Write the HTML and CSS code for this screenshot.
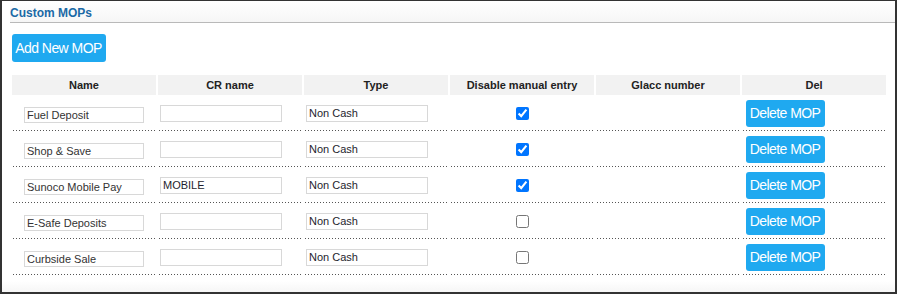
FILE: index.html
```html
<!DOCTYPE html>
<html>
<head>
<meta charset="utf-8">
<link rel="stylesheet" href="styles.css">
</head>
<body>
<div class="panel">
  <div class="panel-head"><span class="panel-title">Custom MOPs</span></div>
  <div class="toolbar"><button class="btn btn-add">Add New MOP</button></div>
  <table class="mops">
    <thead>
      <tr>
        <th>Name</th>
        <th>CR name</th>
        <th>Type</th>
        <th>Disable manual entry</th>
        <th>Glacc number</th>
        <th>Del</th>
      </tr>
    </thead>
    <tbody>
      <tr>
        <td><input class="in-name" type="text" value="Fuel Deposit"></td>
        <td><input class="in-field" type="text" value=""></td>
        <td><input class="in-field" type="text" value="Non Cash"></td>
        <td><input class="chk" type="checkbox" checked></td>
        <td></td>
        <td><button class="btn btn-del">Delete MOP</button></td>
      </tr>
      <tr>
        <td><input class="in-name" type="text" value="Shop &amp; Save"></td>
        <td><input class="in-field" type="text" value=""></td>
        <td><input class="in-field" type="text" value="Non Cash"></td>
        <td><input class="chk" type="checkbox" checked></td>
        <td></td>
        <td><button class="btn btn-del">Delete MOP</button></td>
      </tr>
      <tr>
        <td><input class="in-name" type="text" value="Sunoco Mobile Pay"></td>
        <td><input class="in-field" type="text" value="MOBILE"></td>
        <td><input class="in-field" type="text" value="Non Cash"></td>
        <td><input class="chk" type="checkbox" checked></td>
        <td></td>
        <td><button class="btn btn-del">Delete MOP</button></td>
      </tr>
      <tr>
        <td><input class="in-name" type="text" value="E-Safe Deposits"></td>
        <td><input class="in-field" type="text" value=""></td>
        <td><input class="in-field" type="text" value="Non Cash"></td>
        <td><input class="chk" type="checkbox"></td>
        <td></td>
        <td><button class="btn btn-del">Delete MOP</button></td>
      </tr>
      <tr>
        <td><input class="in-name" type="text" value="Curbside Sale"></td>
        <td><input class="in-field" type="text" value=""></td>
        <td><input class="in-field" type="text" value="Non Cash"></td>
        <td><input class="chk" type="checkbox"></td>
        <td></td>
        <td><button class="btn btn-del">Delete MOP</button></td>
      </tr>
    </tbody>
  </table>
</div>
</body>
</html>
```
FILE: styles.css
```css
html, body {
  margin: 0;
  padding: 0;
  background: #ffffff;
}
body {
  font-family: "Liberation Sans", Arial, sans-serif;
  color: #222;
}
.panel {
  box-sizing: border-box;
  width: 897px;
  height: 294px;
  border-top: 1px solid #333;
  border-left: 2px solid #333;
  border-right: 2px solid #333;
  border-bottom: 2px solid #333;
  padding-left: 8px;
  background: linear-gradient(to bottom, #ffffff 0, #ffffff 280px, #f6f6f6 291px);
}
.panel-head {
  box-sizing: border-box;
  height: 22px;
  padding-top: 5px;
  border-bottom: 1px solid #b9b9b9;
  background: linear-gradient(to bottom, #ffffff 0, #f6f6f6 100%);
}
.panel-title {
  display: block;
  font-size: 12px;
  line-height: 14px;
  font-weight: bold;
  color: #1c6aa6;
}
.toolbar {
  padding: 11px 0 11px 2px;
}
.btn {
  font-family: "Liberation Sans", Arial, sans-serif;
  font-size: 14px;
  letter-spacing: -0.55px;
  color: #ffffff;
  background: #1fa9f0;
  border: none;
  border-radius: 3px;
  padding: 0 4px 0 3px;
  cursor: pointer;
}
.btn-add {
  display: block;
  width: 94px;
  height: 28px;
  line-height: 28px;
}
.btn-del {
  display: block;
  width: 79px;
  height: 27px;
  line-height: 27px;
  margin-left: 4px;
}
.mops {
  width: 878px;
  table-layout: fixed;
  border-collapse: separate;
  border-spacing: 2px;
}
.mops th {
  height: 20px;
  padding: 0;
  background: #f2f2f2;
  font-size: 11px;
  font-weight: bold;
  color: #222;
  text-align: center;
  vertical-align: middle;
}
.mops td {
  box-sizing: border-box;
  height: 34px;
  padding: 0 0 1px 0;
  vertical-align: middle;
  background-image: linear-gradient(to right, #555 1px, transparent 1px);
  background-size: 3px 1px;
  background-repeat: repeat-x;
  background-position: 1px 100%;
}
.in-name {
  display: block;
  box-sizing: border-box;
  width: 120px;
  height: 16px;
  margin: 3px auto 0;
  padding: 0 2px;
  border: 1px solid #d8d8d8;
  font-family: "Liberation Sans", Arial, sans-serif;
  font-size: 11px;
  color: #333;
  outline: none;
}
.in-field {
  display: block;
  box-sizing: border-box;
  width: 122px;
  height: 17px;
  margin: 0 0 0 2px;
  padding: 0 2px 2px;
  border: 1px solid #d8d8d8;
  font-family: "Liberation Sans", Arial, sans-serif;
  font-size: 11px;
  color: #1e1e2e;
  outline: none;
}
.chk {
  display: block;
  width: 13px;
  height: 13px;
  margin: 0 auto;
  accent-color: #0075ff;
}
```
